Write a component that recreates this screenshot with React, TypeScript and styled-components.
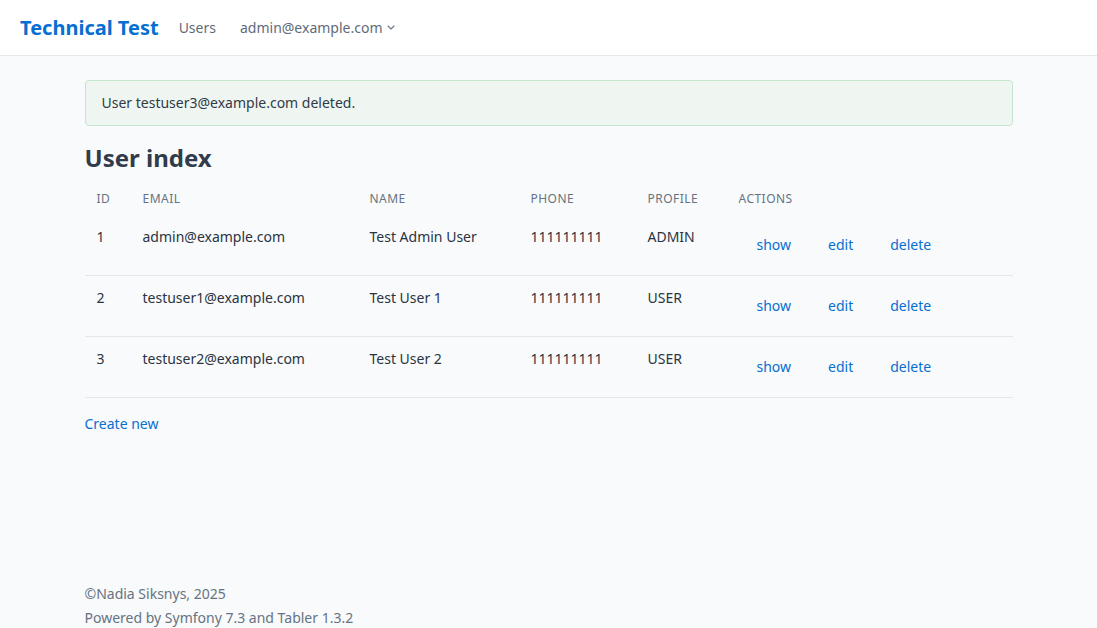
import React from "react";
import styled, { createGlobalStyle } from "styled-components";

const GlobalStyle = createGlobalStyle`
  html, body { margin: 0; padding: 0; }
  body {
    background: #f9fafb;
    color: #182433;
    font-family: "Noto Sans", "Open Sans", sans-serif;
    font-size: 14px;
    line-height: 20px;
    -webkit-font-smoothing: antialiased;
  }
  * { box-sizing: border-box; }
`;

const Page = styled.div`
  min-height: 100vh;
  display: flex;
  flex-direction: column;
`;

const Header = styled.header`
  height: 56px;
  background: #ffffff;
  border-bottom: 1px solid #e6e8eb;
  display: flex;
  align-items: center;
  padding: 0 20px;
  gap: 20px;
`;

const Brand = styled.a`
  color: #066fd1;
  font-size: 20px;
  font-weight: 700;
  text-decoration: none;
`;

const NavLink = styled.a<{ $ml?: number }>`
  color: #5f6b7a;
  font-size: 14px;
  text-decoration: none;
  display: inline-flex;
  align-items: center;
  gap: 4px;
  margin-left: ${(p) => p.$ml ?? 0}px;
`;

const Main = styled.main`
  flex: 1;
  width: 928px;
  margin: 0 auto;
  padding-top: 24px;
`;

const Alert = styled.div`
  background: #eff6f2;
  border: 1px solid #c4e6cc;
  border-radius: 4px;
  padding: 12px 16px;
  color: #313a46;
`;

const Title = styled.h1`
  margin: 16px 0 9px;
  font-size: 24px;
  line-height: 32px;
  font-weight: 700;
  color: #313b4c;
`;

const Table = styled.table`
  width: 100%;
  border-collapse: collapse;
  table-layout: fixed;
`;

const Th = styled.th`
  text-align: left;
  font-weight: 400;
  font-size: 12px;
  line-height: 16px;
  text-transform: uppercase;
  color: #667382;
  padding: 8px 12px;
  letter-spacing: 0.04em;
`;

const Tr = styled.tr`
  border-bottom: 1px solid #e4e6ea;
`;

const Td = styled.td<{ $pl?: number }>`
  padding: 12px 12px 12px ${(p) => p.$pl ?? 12}px;
  vertical-align: top;
  color: #2a3442;
  white-space: nowrap;
`;

const ActionLink = styled.a`
  display: inline-block;
  padding: 7px 16px;
  border: 1px solid transparent;
  color: #066fd1;
  text-decoration: none;
  line-height: 20px;
  margin-right: 3px;
`;

const CreateLink = styled.a`
  display: inline-block;
  margin-top: 16px;
  color: #066fd1;
  text-decoration: none;
`;

const Footer = styled.footer`
  width: 928px;
  margin: 0 auto;
  color: #667382;
  line-height: 24px;
  height: 46px;
`;

const Chevron = () => (
  <svg width="8" height="5" viewBox="0 0 8 5" fill="none">
    <path d="M1 1l3 3 3-3" stroke="#6b7684" strokeWidth="1.1" strokeLinecap="round" strokeLinejoin="round" />
  </svg>
);

const users = [
  { id: 1, email: "admin@example.com", name: "Test Admin User", phone: "111111111", profile: "ADMIN" },
  { id: 2, email: "testuser1@example.com", name: "Test User 1", phone: "111111111", profile: "USER" },
  { id: 3, email: "testuser2@example.com", name: "Test User 2", phone: "111111111", profile: "USER" },
];

const cols = [46, 227, 161, 117, 91, 286];

export default function App() {
  return (
    <>
      <GlobalStyle />
      <Page>
        <Header>
          <Brand href="#">Technical Test</Brand>
          <NavLink href="#">Users</NavLink>
          <NavLink href="#" $ml={4}>
            admin@example.com <Chevron />
          </NavLink>
        </Header>
        <Main>
          <Alert>User testuser3@example.com deleted.</Alert>
          <Title>User index</Title>
          <Table>
            <colgroup>
              {cols.map((w, i) => (
                <col key={i} style={{ width: w }} />
              ))}
            </colgroup>
            <thead>
              <tr>
                <Th>Id</Th>
                <Th>Email</Th>
                <Th>Name</Th>
                <Th>Phone</Th>
                <Th>Profile</Th>
                <Th>actions</Th>
              </tr>
            </thead>
            <tbody>
              {users.map((u) => (
                <Tr key={u.id}>
                  <Td>{u.id}</Td>
                  <Td>{u.email}</Td>
                  <Td>{u.name}</Td>
                  <Td>{u.phone}</Td>
                  <Td>{u.profile}</Td>
                  <Td $pl={13}>
                    <ActionLink href="#">show</ActionLink>
                    <ActionLink href="#">edit</ActionLink>
                    <ActionLink href="#">delete</ActionLink>
                  </Td>
                </Tr>
              ))}
            </tbody>
          </Table>
          <CreateLink href="#">Create new</CreateLink>
        </Main>
        <Footer>
          <div>©Nadia Siksnys, 2025</div>
          <div>Powered by Symfony 7.3 and Tabler 1.3.2</div>
        </Footer>
      </Page>
    </>
  );
}
